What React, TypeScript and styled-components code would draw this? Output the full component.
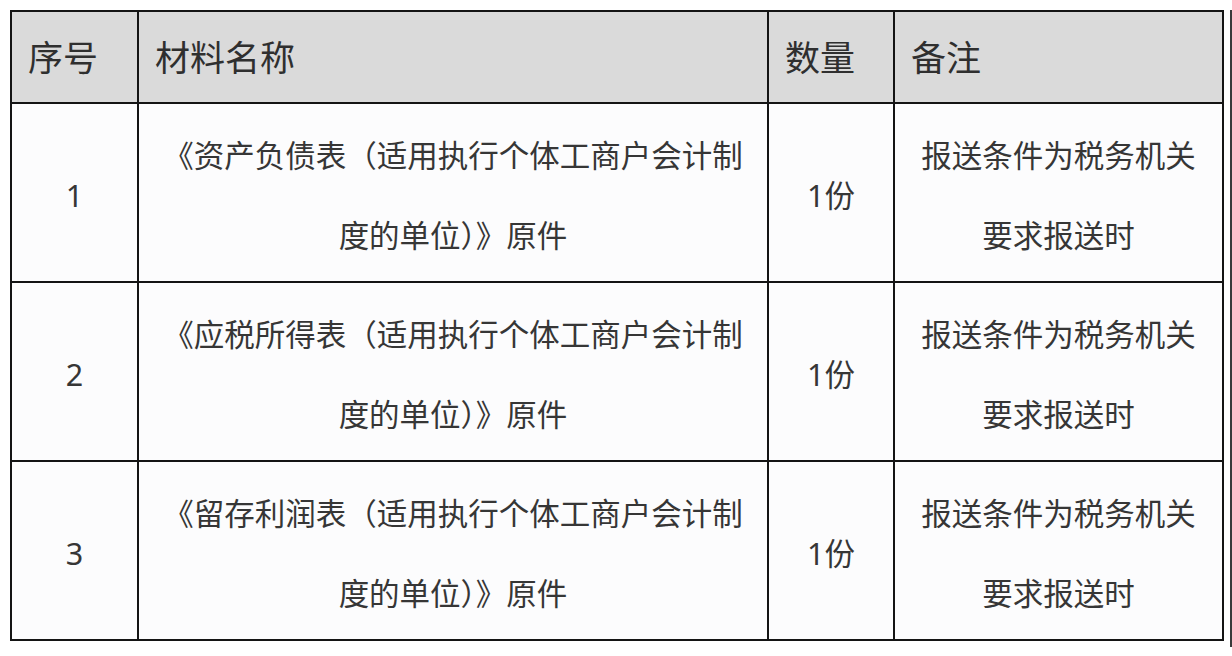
import styled, { createGlobalStyle } from "styled-components";

const GlobalStyle = createGlobalStyle`
  html, body {
    margin: 0;
    padding: 0;
    background: #ffffff;
  }
  body {
    font-family: "Noto Sans", "Noto Sans CJK SC", sans-serif;
    color: #333333;
  }
`;

const Page = styled.div`
  display: flex;
  padding-top: 10px;
`;

// тонкая тёмная полоса справа, как на скриншоте
const Frame = styled.div`
  padding: 0 6px 6px 10px;
  border-right: 2px solid #3a3a3a;
`;

const Table = styled.table`
  border-collapse: collapse;
  table-layout: fixed;
  width: 1212px;
  background: #fcfcfd;
  border: 2px solid #141414;
`;

const Col = styled.col<{ width: number }>`
  width: ${(p) => p.width}px;
`;

const Row = styled.tr<{ head?: boolean }>`
  height: ${(p) => (p.head ? 92 : 179)}px;
`;

const HeadCell = styled.th`
  padding: 0 0 4px 16px;
  background: #dadada;
  border: 2px solid #141414;
  text-align: left;
  font-weight: 400;
  font-size: 35px;
  color: #2f2f2f;
`;

const Cell = styled.td<{ wide?: boolean }>`
  padding: 4px ${(p) => (p.wide ? 20 : 18)}px 0;
  border: 2px solid #141414;
  text-align: center;
  vertical-align: middle;
  font-size: 30.5px;
  line-height: 80px;
  color: #363636;
`;

const columns = [
  { title: "序号", width: 127 },
  { title: "材料名称", width: 630 },
  { title: "数量", width: 126 },
  { title: "备注", width: 329 },
];

const rows = [
  { num: 1, name: "《资产负债表（适用执行个体工商户会计制度的单位）》原件" },
  { num: 2, name: "《应税所得表（适用执行个体工商户会计制度的单位）》原件" },
  { num: 3, name: "《留存利润表（适用执行个体工商户会计制度的单位）》原件" },
];

export default function App() {
  return (
    <>
      <GlobalStyle />
      <Page>
        <Frame>
          <Table>
            <colgroup>
              {columns.map((c) => (
                <Col key={c.title} width={c.width} />
              ))}
            </colgroup>
            <thead>
              <Row head>
                {columns.map((c) => (
                  <HeadCell key={c.title}>{c.title}</HeadCell>
                ))}
              </Row>
            </thead>
            <tbody>
              {rows.map((r) => (
                <Row key={r.num}>
                  <Cell>{r.num}</Cell>
                  <Cell wide>{r.name}</Cell>
                  <Cell>1份</Cell>
                  <Cell>报送条件为税务机关要求报送时</Cell>
                </Row>
              ))}
            </tbody>
          </Table>
        </Frame>
      </Page>
    </>
  );
}
